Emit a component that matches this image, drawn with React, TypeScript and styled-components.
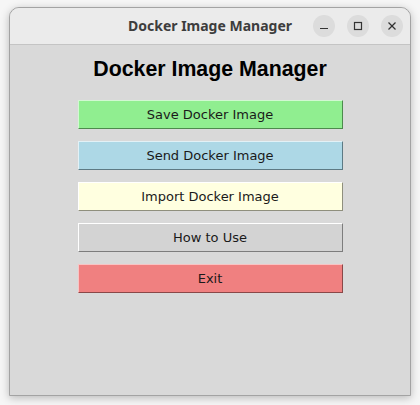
import React from "react";
import styled, { createGlobalStyle } from "styled-components";

const Global = createGlobalStyle`
  html, body { margin: 0; padding: 0; background: #f6f6f6; }
  body { width: 420px; height: 405px; overflow: hidden; }
`;

const Desktop = styled.div`
  width: 420px;
  height: 405px;
  padding: 7px 9px 0 9px;
  box-sizing: border-box;
`;

const Window = styled.div`
  width: 402px;
  height: 389px;
  box-sizing: border-box;
  border: 1px solid #a3a3a3;
  border-radius: 10px 10px 0 0;
  background: #d9d9d9;
  box-shadow: 0 2px 8px rgba(0, 0, 0, 0.25);
  display: flex;
  flex-direction: column;
  overflow: hidden;
`;

const TitleBar = styled.div`
  height: 37px;
  flex: none;
  background: #ebebeb;
  border-bottom: 1px solid #c4c4c4;
  box-sizing: border-box;
  display: flex;
  align-items: center;
  justify-content: flex-end;
  position: relative;
`;

const TitleText = styled.div`
  position: absolute;
  left: 0;
  right: 0;
  top: 0;
  bottom: 0;
  display: flex;
  align-items: center;
  justify-content: center;
  font-family: "Noto Sans", "DejaVu Sans", sans-serif;
  font-weight: 700;
  font-size: 14px;
  color: #3d3d3d;
  padding-bottom: 2px;
`;

const Controls = styled.div`
  display: flex;
  gap: 12px;
  padding-right: 7px;
  position: relative;
`;

const CtlButton = styled.div`
  width: 22px;
  height: 22px;
  border-radius: 50%;
  background: #dcdcdc;
  display: flex;
  align-items: center;
  justify-content: center;
`;

const Body = styled.div`
  flex: 1;
  display: flex;
  flex-direction: column;
  align-items: center;
`;

const Heading = styled.h1`
  margin: 11px 0 0 0;
  font-family: "Liberation Sans", Arial, sans-serif;
  font-weight: 700;
  font-size: 21.33px;
  line-height: 26px;
  color: #000;
`;

const ButtonList = styled.div`
  margin-top: 18px;
  display: flex;
  flex-direction: column;
  gap: 12px;
`;

const TkButton = styled.div<{ $bg: string; $light: string; $dark: string }>`
  width: 265px;
  height: 29px;
  box-sizing: border-box;
  background: ${(p) => p.$bg};
  border-top: 1px solid ${(p) => p.$light};
  border-left: 1px solid ${(p) => p.$light};
  border-bottom: 1px solid ${(p) => p.$dark};
  border-right: 1px solid ${(p) => p.$dark};
  display: flex;
  align-items: center;
  justify-content: center;
  padding-bottom: 1px;
  font-family: "DejaVu Sans", sans-serif;
  font-size: 13px;
  color: #1a1a1a;
`;

const buttons = [
  { label: "Save Docker Image", bg: "#90ee90", light: "#d2f8d2", dark: "#4d8a4d" },
  { label: "Send Docker Image", bg: "#add8e6", light: "#e2f1f6", dark: "#5d7a84" },
  { label: "Import Docker Image", bg: "#ffffe0", light: "#ffffff", dark: "#8f8f7d" },
  { label: "How to Use", bg: "#d3d3d3", light: "#ffffff", dark: "#7d7d7d" },
  { label: "Exit", bg: "#f08080", light: "#f8c4c4", dark: "#8a4848" },
];

export default function App() {
  return (
    <>
      <Global />
      <Desktop>
        <Window>
          <TitleBar>
            <TitleText>Docker Image Manager</TitleText>
            <Controls>
              <CtlButton>
                <svg width="10" height="10" viewBox="0 0 10 10">
                  <line x1="1" y1="7.5" x2="9" y2="7.5" stroke="#333" strokeWidth="1.2" />
                </svg>
              </CtlButton>
              <CtlButton>
                <svg width="10" height="10" viewBox="0 0 10 10">
                  <rect x="1.5" y="1.5" width="7" height="7" fill="none" stroke="#333" strokeWidth="1.2" />
                </svg>
              </CtlButton>
              <CtlButton>
                <svg width="10" height="10" viewBox="0 0 10 10">
                  <line x1="1.5" y1="1.5" x2="8.5" y2="8.5" stroke="#333" strokeWidth="1.2" />
                  <line x1="8.5" y1="1.5" x2="1.5" y2="8.5" stroke="#333" strokeWidth="1.2" />
                </svg>
              </CtlButton>
            </Controls>
          </TitleBar>
          <Body>
            <Heading>Docker Image Manager</Heading>
            <ButtonList>
              {buttons.map((b) => (
                <TkButton key={b.label} $bg={b.bg} $light={b.light} $dark={b.dark}>
                  {b.label}
                </TkButton>
              ))}
            </ButtonList>
          </Body>
        </Window>
      </Desktop>
    </>
  );
}
